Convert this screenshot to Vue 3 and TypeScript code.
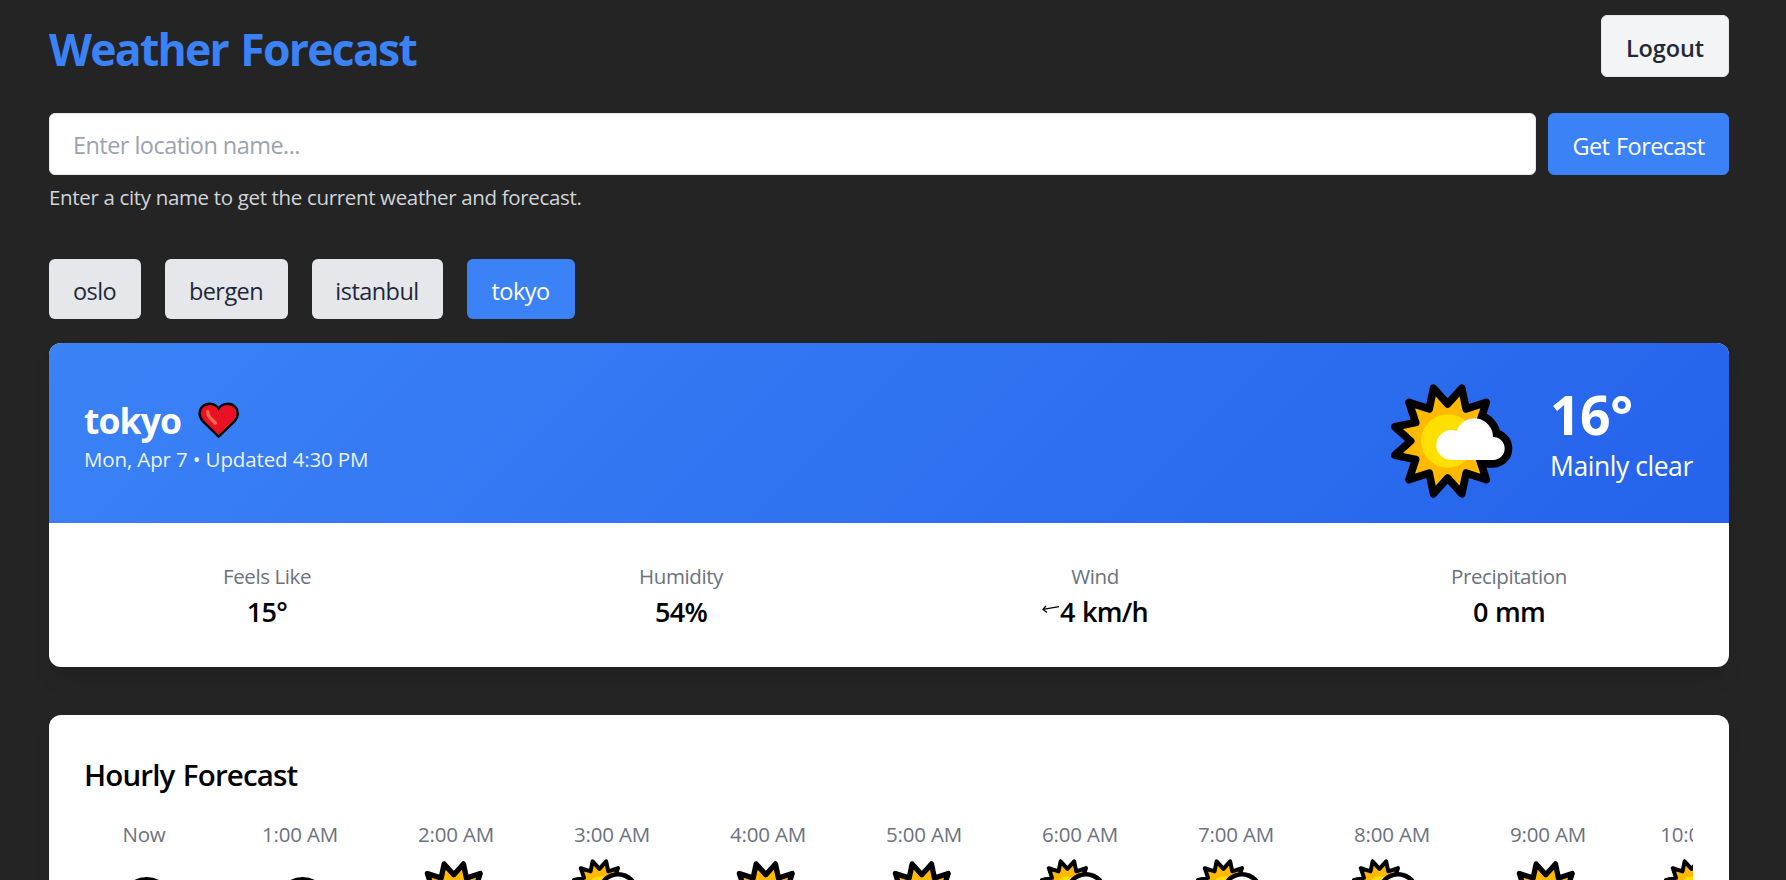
<script setup lang="ts">
import { ref } from 'vue'

type HourIcon = 'moon' | 'sun' | 'cloud'

const location = ref('')
const active = ref('tokyo')
const cities = ['oslo', 'bergen', 'istanbul', 'tokyo']

const hours: { time: string; icon: HourIcon }[] = [
  { time: 'Now', icon: 'moon' },
  { time: '1:00 AM', icon: 'moon' },
  { time: '2:00 AM', icon: 'sun' },
  { time: '3:00 AM', icon: 'cloud' },
  { time: '4:00 AM', icon: 'sun' },
  { time: '5:00 AM', icon: 'sun' },
  { time: '6:00 AM', icon: 'cloud' },
  { time: '7:00 AM', icon: 'cloud' },
  { time: '8:00 AM', icon: 'cloud' },
  { time: '9:00 AM', icon: 'sun' },
  { time: '10:00 AM', icon: 'cloud' },
]

// Twelve-pointed star around the origin; the skipped steps leave the side behind the cloud flat.
function star(skip: number[] = []): string {
  const pts: string[] = []
  for (let i = 0; i < 24; i++) {
    if (skip.includes(i)) continue
    const r = i % 2 ? 164 : 111
    const a = (i * 15 * Math.PI) / 180
    pts.push(`${(r * Math.cos(a)).toFixed(1)},${(r * Math.sin(a)).toFixed(1)}`)
  }
  return pts.join(' ')
}
const fullStar = star()
const cutStar = star([23, 0, 1])
const cloudPath = 'M11 57 A45 45 0 1 1 27 -30 A56 56 0 0 1 136 -12 A34.5 34.5 0 0 1 137 57 Z'
</script>

<template>
  <main class="page">
    <header class="top">
      <h1>Weather Forecast</h1>
      <button class="btn logout">Logout</button>
    </header>

    <form class="search" @submit.prevent>
      <input v-model="location" type="text" placeholder="Enter location name..." />
      <button class="btn primary">Get Forecast</button>
    </form>
    <p class="hint">Enter a city name to get the current weather and forecast.</p>

    <nav class="tabs">
      <button
        v-for="city in cities"
        :key="city"
        :class="['tab', city, { active: city === active }]"
        @click="active = city"
      >{{ city }}</button>
    </nav>

    <section class="card current">
      <div class="hero">
        <div class="where">
          <div class="place">
            <h2>tokyo</h2>
            <svg class="heart" viewBox="473 67 123 111">
              <path d="M535 171 L488 125 C474 110 475 92 486 81 C500 68 524 69 535 87 C546 69 570 68 584 81 C595 92 596 110 582 125 Z" fill="#e81224" stroke="#000" stroke-width="7" />
              <path d="M502 96 Q502 107 509 114 L525 130" fill="none" stroke="#f4694f" stroke-width="10" stroke-linecap="round" />
            </svg>
          </div>
          <p class="date">Mon, Apr 7 • Updated 4:30 PM</p>
        </div>
        <div class="now">
          <svg class="big-icon" viewBox="-173 -174 372 348">
            <path :d="cloudPath" stroke="#000" stroke-width="46" stroke-linejoin="round" />
            <polygon :points="cutStar" fill="#ffb900" stroke="#000" stroke-width="23" stroke-linejoin="round" />
            <circle r="80" fill="#fde000" />
            <path :d="cloudPath" fill="#fff" />
          </svg>
          <div class="reading">
            <p class="temp">16°</p>
            <p class="cond">Mainly clear</p>
          </div>
        </div>
      </div>
      <dl class="stats">
        <div><dt>Feels Like</dt><dd>15°</dd></div>
        <div><dt>Humidity</dt><dd>54%</dd></div>
        <div>
          <dt>Wind</dt>
          <dd class="wind">
            <svg class="arrow" viewBox="0 0 18 12">
              <path d="M17 2.6 L1 5.4 M4 2 L1 5.4 L5 8.4" fill="none" stroke="#000" stroke-width="1.3" />
            </svg><span>4 km/h</span>
          </dd>
        </div>
        <div><dt>Precipitation</dt><dd>0 mm</dd></div>
      </dl>
    </section>

    <section class="card hourly">
      <h3>Hourly Forecast</h3>
      <div class="hours">
        <div v-for="h in hours" :key="h.time" class="hour">
          <span>{{ h.time }}</span>
          <svg viewBox="0 0 60 84">
            <template v-if="h.icon === 'moon'">
              <circle cx="32.6" cy="53" r="24" fill="#ffb900" stroke="#000" stroke-width="4" />
            </template>
            <g v-else-if="h.icon === 'sun'" transform="translate(27.8 50) scale(0.228)">
              <polygon :points="fullStar" fill="#ffb900" stroke="#000" stroke-width="23" stroke-linejoin="round" />
              <circle r="70" fill="#fde000" />
            </g>
            <template v-else>
              <g transform="translate(17.4 36.7) scale(0.16)">
                <polygon :points="fullStar" fill="#ffb900" stroke="#000" stroke-width="25" stroke-linejoin="round" />
                <circle r="66" fill="#fde000" />
              </g>
              <circle cx="36.1" cy="42.7" r="20.7" />
              <path d="M14 66 A11 11 0 0 1 19.4 45.5 A16.7 16.7 0 1 1 52.6 44.7 A11 11 0 0 1 54 66 Z" fill="#fff" />
            </template>
          </svg>
        </div>
      </div>
    </section>
  </main>
</template>

<style>
body {
  background: #242424;
}
</style>

<style scoped>
.page {
  box-sizing: border-box;
  height: 880px;
  padding: 15px 57px 0 49px;
  overflow: hidden;
  background: #242424;
  font-family: "Open Sans", "Noto Sans", sans-serif;
  font-size: 23.5px;
}
h1, h2, h3, p, dl, dd { margin: 0; }
.top {
  display: flex;
  justify-content: space-between;
  height: 62px;
}
h1 {
  color: #3b82f6;
  font-size: 44.5px;
  font-weight: 700;
  line-height: 68px;
  letter-spacing: -1.75px;
  word-spacing: 2.5px;
}
.btn {
  box-sizing: border-box;
  height: 62px;
  padding: 3px 0 0;
  border: 1px solid #e5e7eb;
  border-radius: 6px;
  font: inherit;
  white-space: nowrap;
}
.logout {
  width: 128px;
  background: #f3f4f6;
  color: #1f2937;
  font-weight: 550;
  letter-spacing: -0.1px;
}
.primary {
  width: 181px;
  border-color: #3b82f6;
  background: #3b82f6;
  color: #fff;
  letter-spacing: -0.55px;
  word-spacing: 1px;
}
.search {
  display: flex;
  gap: 12px;
  margin-top: 36px;
}
.search input {
  box-sizing: border-box;
  flex: 1;
  height: 62px;
  padding: 2px 24px 0 23px;
  border: 1px solid #e5e7eb;
  border-radius: 6px;
  background: #fff;
  font: inherit;
  letter-spacing: -0.55px;
}
.search input::placeholder { color: #9ca3af; opacity: 1; }
.hint {
  margin-top: 7px;
  color: #d1d5db;
  font-size: 20.5px;
  line-height: 30px;
  letter-spacing: -0.34px;
}
.tabs {
  display: flex;
  gap: 24px;
  margin-top: 47px;
}
.tab {
  height: 60px;
  padding: 3px 1px 0 0;
  border: 0;
  border-radius: 6px;
  background: #e5e7eb;
  color: #1f2937;
  font: inherit;
  letter-spacing: -0.55px;
}
.oslo { width: 92px; }
.bergen { width: 123px; }
.istanbul { width: 131px; }
.tokyo { width: 108px; }
.tab.active { background: #3b82f6; color: #fff; }
.card {
  overflow: hidden;
  border-radius: 12px;
  background: #fff;
  box-shadow: 0 15px 22px -5px rgba(0, 0, 0, 0.1), 0 6px 9px -6px rgba(0, 0, 0, 0.1);
}
.current { height: 324px; margin-top: 24px; }
.hero {
  box-sizing: border-box;
  display: flex;
  justify-content: space-between;
  align-items: center;
  height: 180px;
  padding: 0 36px 0 35px;
  background: linear-gradient(135deg, #3b82f6, #2563eb);
  color: #fff;
}
.where { padding-top: 4px; }
.place { display: flex; align-items: center; gap: 17px; }
h2 { font-size: 35.5px; line-height: 48px; letter-spacing: -0.9px; }
.heart { width: 41px; height: 37px; }
.date { font-size: 20.5px; line-height: 30px; letter-spacing: -0.13px; opacity: 0.9; }
.now { display: flex; align-items: center; gap: 36px; }
.big-icon { width: 124px; height: 116px; margin-top: 15px; }
.reading { width: 143px; padding-top: 7px; white-space: nowrap; }
.temp { font-size: 53.5px; font-weight: 700; line-height: 56px; letter-spacing: -0.5px; }
.cond { margin-top: 2px; font-size: 26.5px; line-height: 42px; letter-spacing: -0.45px; }
.stats {
  display: grid;
  grid-template-columns: repeat(4, 1fr);
  gap: 24px;
  padding: 38px 25px 0 23px;
  text-align: center;
}
dt { color: #6b7280; font-size: 20.5px; line-height: 30px; letter-spacing: -0.4px; }
dd { color: #000; font-size: 27px; font-weight: 550; line-height: 42px; letter-spacing: -0.7px; word-spacing: 1px; }
.arrow { width: 18px; height: 12px; margin-bottom: 6px; }
.hourly { height: 300px; margin-top: 48px; padding: 36px 36px 0 35px; }
h3 {
  font-size: 29.5px;
  font-weight: 550;
  line-height: 48px;
  letter-spacing: -0.85px;
  word-spacing: 1.5px;
}
.hours {
  display: flex;
  gap: 36px;
  margin-top: 20px;
  overflow: hidden;
}
.hour {
  display: flex;
  flex: 0 0 120px;
  flex-direction: column;
  align-items: center;
  color: #6b7280;
  font-size: 20.5px;
  line-height: 31px;
  letter-spacing: -0.2px;
}
.hour svg { width: 60px; height: 84px; overflow: visible; }
</style>
